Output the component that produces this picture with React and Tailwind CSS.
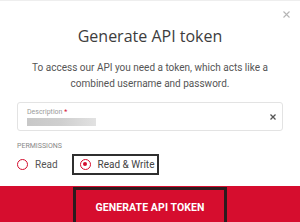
import React from "react";

export default function App() {
  return (
    <div className="w-[300px] h-[222px] bg-white flex flex-col overflow-hidden border-t border-[#eeeeee] font-['Roboto',sans-serif]">
      <div className="flex justify-end h-[24px] pr-[10px] pt-[10px]">
        <svg width="7" height="7" viewBox="0 0 7 7" className="block">
          <path d="M0.5 0.5 L6.5 6.5 M6.5 0.5 L0.5 6.5" stroke="#b5b5b5" strokeWidth="1.1" />
        </svg>
      </div>
      <h1 className="text-center text-[16px] leading-[20px] text-[#3d3d3d] font-['Open_Sans',sans-serif] mt-[1px]">
        Generate API token
      </h1>
      <p className="text-center text-[10px] leading-[16px] text-[#555555] mt-[14px] px-[30px]">
        To access our API you need a token, which acts like a combined username and password.
      </p>
      <div className="mx-[17px] mt-[10px] h-[29px] border border-[#e3e3e3] rounded-[3px] flex items-center pl-[9px] pr-[6px]">
        <div className="flex-1 flex flex-col">
          <div className="text-[7px] leading-[9px] text-[#9a9a9a]">
            Description <span className="text-[#d50c2d]">*</span>
          </div>
          <div className="mt-[1px] w-[69px] h-[8px] bg-gradient-to-r from-[#c8c8c8] via-[#cfcfcf] to-[#e2e2e2]" />
        </div>
        <svg width="6" height="6" viewBox="0 0 6 6" className="block">
          <path d="M0.5 0.5 L5.5 5.5 M5.5 0.5 L0.5 5.5" stroke="#555555" strokeWidth="1.3" />
        </svg>
      </div>
      <div className="ml-[17px] mt-[10px] text-[7px] leading-[10px] text-[#888888] uppercase">Permissions</div>
      <div className="flex items-center ml-[17px] mt-[3px] h-[20px] whitespace-nowrap">
        <div className="flex items-center gap-[7px]">
          <span className="shrink-0 w-[11px] h-[11px] rounded-full border-[1.5px] border-[#d50c2d]" />
          <span className="text-[10px] text-[#555555]">Read</span>
        </div>
        <div className="ml-[14px] h-[21px] w-[87px] shrink-0 border-2 border-[#2f2f2f] flex items-center pl-[6px] gap-[7px]">
          <span className="shrink-0 w-[11px] h-[11px] rounded-full border-[1.5px] border-[#d50c2d] flex items-center justify-center">
            <span className="w-[4px] h-[4px] rounded-full bg-[#d50c2d]" />
          </span>
          <span className="text-[10px] text-[#444444]">Read &amp; Write</span>
        </div>
      </div>
      <div className="mt-[12px] flex-1 bg-[#d60d2e] flex justify-center">
        <div className="w-[154px] h-full mt-[1px] border-[3px] border-b-0 border-[#2c1b1e] flex items-center justify-center">
          <span className="text-white font-bold text-[10.5px] tracking-[0.1px] pt-[2px] whitespace-nowrap">GENERATE API TOKEN</span>
        </div>
      </div>
    </div>
  );
}
